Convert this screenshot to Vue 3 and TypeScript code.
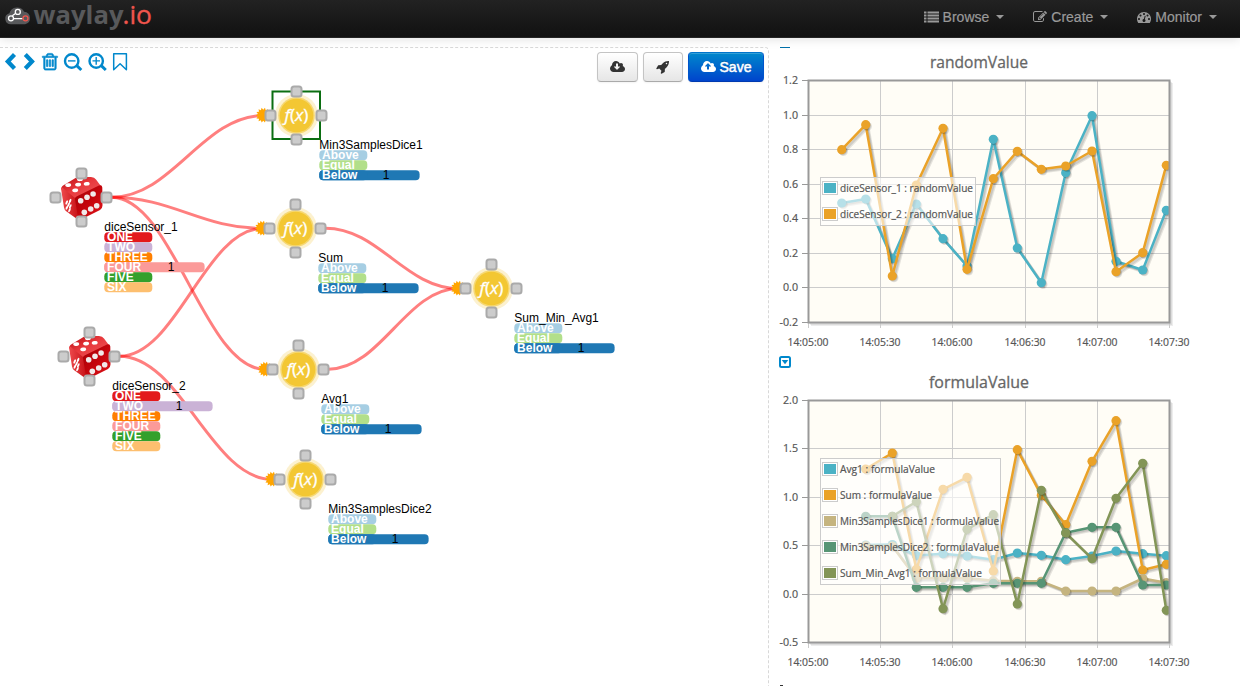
<script setup lang="ts">
type Pt = [number, number]

interface StateRow { name: string; color: string }
interface GraphNode {
  id: string
  kind: 'dice' | 'formula'
  x: number
  y: number
  active: number
  selected?: boolean
}
interface Series { label: string; color: string; start: number; ys: number[] }
interface Chart {
  title: string
  yLabels: string[]
  series: Series[]
  legend: { x: number; y: number; w: number; h: number }
  labelWidths: number[]
  titleWidth: number
}

const diceStates: StateRow[] = [
  { name: 'ONE', color: '#e31a1c' },
  { name: 'TWO', color: '#cab2d6' },
  { name: 'THREE', color: '#ff7f00' },
  { name: 'FOUR', color: '#fb9a99' },
  { name: 'FIVE', color: '#33a02c' },
  { name: 'SIX', color: '#fdbf6f' },
]
const formulaStates: StateRow[] = [
  { name: 'Above', color: '#a6cee3' },
  { name: 'Equal', color: '#b2df8a' },
  { name: 'Below', color: '#1f78b4' },
]

const nodes: GraphNode[] = [
  { id: 'diceSensor_1', kind: 'dice', x: 81.5, y: 197.5, active: 3 },
  { id: 'diceSensor_2', kind: 'dice', x: 89.5, y: 356.5, active: 1 },
  { id: 'Min3SamplesDice1', kind: 'formula', x: 296.5, y: 115.5, active: 2, selected: true },
  { id: 'Sum', kind: 'formula', x: 295.5, y: 228.5, active: 2 },
  { id: 'Avg1', kind: 'formula', x: 298.5, y: 369.5, active: 2 },
  { id: 'Min3SamplesDice2', kind: 'formula', x: 305.5, y: 479.5, active: 2 },
  { id: 'Sum_Min_Avg1', kind: 'formula', x: 491.5, y: 288.5, active: 2 },
]
const links: [number, number][] = [[0, 2], [0, 3], [0, 4], [1, 3], [1, 5], [3, 6], [4, 6]]
const ports: Pt[] = [[0, -24], [25, 0], [0, 24], [-26, 0]]

const statesOf = (n: GraphNode) => (n.kind === 'dice' ? diceStates : formulaStates)

function linkPath([a, b]: [number, number]): string {
  const x1 = nodes[a].x + 30
  const y1 = nodes[a].y - 0.3
  const x2 = nodes[b].x - 33
  const y2 = nodes[b].y
  const reach = (x2 - x1) * 0.4
  return `M${x1} ${y1}C${x1 + reach} ${y1} ${x2 - reach} ${y2} ${x2} ${y2}`
}

const gear = Array.from({ length: 28 }, (_, i) => {
  const r = i % 2 ? 5.5 : 7.6
  const a = (i * Math.PI) / 14
  return `${(Math.cos(a) * r).toFixed(2)},${(Math.sin(a) * r).toFixed(2)}`
}).join(' ')

const rightPips: Pt[] = [[-0.8, 3.2], [5.5, -0.2], [11.6, -3.5], [2.8, 14.8], [9.2, 11.5], [15.2, 8.2]]
const topPips: Pt[] = [[-13.3, -12.4], [-1.5, -18.2], [-3.4, -12.9], [5.2, -13.7], [-6.3, -7.1]]
const leftPips: Pt[] = [[-11.4, 3.5], [-12.9, 7.2], [-14.6, 10.2], [-14.8, 5], [-11.2, 8.8], [-12, 12.6]]

const xs = [33.7, 57.7, 84.3, 108.3, 135, 159, 185.3, 209.3, 233.3, 257.7, 284, 308, 334.7, 358.3]
const xLabels = ['14:05:00', '14:05:30', '14:06:00', '14:06:30', '14:07:00', '14:07:30']

const charts: Chart[] = [
  {
    title: 'randomValue',
    titleWidth: 98,
    yLabels: ['1.2', '1.0', '0.8', '0.6', '0.4', '0.2', '0.0', '-0.2'],
    legend: { x: 12.5, y: 97.5, w: 155, h: 48 },
    labelWidths: [133, 133],
    series: [
      { label: 'diceSensor_1 : randomValue', color: '#4bb2c5', start: 0,
        ys: [123, 119, 178.7, 124, 158.7, 186, 59.3, 168, 202.7, 92.7, 35.7, 181.3, 190, 130.3] },
      { label: 'diceSensor_2 : randomValue', color: '#eaa228', start: 0,
        ys: [69.7, 44.7, 196, 105, 48.3, 189.3, 98.7, 71.3, 89.3, 86, 71, 191.7, 172.7, 85.3] },
    ],
  },
  {
    title: 'formulaValue',
    titleWidth: 100,
    yLabels: ['2.0', '1.5', '1.0', '0.5', '0.0', '-0.5'],
    legend: { x: 12.5, y: 58.5, w: 180, h: 126 },
    labelWidths: [95, 92, 159, 159, 142],
    series: [
      { label: 'Avg1 : formulaValue', color: '#4bb2c5', start: 1,
        ys: [145, 144.5, 155.5, 153.7, 156, 159.7, 153, 155.3, 159.7, 156, 151, 153.7, 155.7] },
      { label: 'Sum : formulaValue', color: '#eaa228', start: 1,
        ys: [69, 53, 169.3, 89.3, 77.3, 171, 49.7, 95.3, 124.7, 61.3, 20.7, 170, 164.3] },
      { label: 'Min3SamplesDice1 : formulaValue', color: '#c5b47f', start: 1,
        ys: [145.7, 146, 178.3, 178, 178, 180.7, 181.3, 181.3, 191, 191, 191, 178.5, 182.7] },
      { label: 'Min3SamplesDice2 : formulaValue', color: '#579575', start: 1,
        ys: [116.3, 116.3, 187.3, 187.3, 187.3, 183.3, 183.3, 183.3, 132.7, 127.3, 127.3, 185, 185] },
      { label: 'Sum_Min_Avg1 : formulaValue', color: '#839557', start: 2,
        ys: [116.3, 101.7, 208.7, 129.3, 114.7, 204, 90.3, 133, 158.7, 98.3, 63.3, 210.3] },
    ],
  },
]

const pointsOf = (s: Series): Pt[] => s.ys.map((y, i) => [xs[i + s.start], y])
const lineOf = (s: Series) => pointsOf(s).map((p) => p.join(',')).join(' ')
const tickY = (i: number, c: Chart) => Math.round((i * 242) / (c.yLabels.length - 1)) + 0.5
const tickX = (i: number) => Math.round(i * 72.2) + 0.5
const shadowSteps = [1, 2, 3]

const cloudPath = 'M1856 1152q0 159-112.5 271.5t-271.5 112.5h-1088q-185 0-316.5-131.5t-131.5-316.5q0-130 70-240t188-165q-2-30-2-43 0-212 150-362t362-150q156 0 285.5 87t188.5 231q71-62 166-62 106 0 181 75t75 181q0 76-41 138 130 31 213.5 135.5t83.5 238.5z'
const downArrow = 'M1216 864q0-14-9-23t-23-9h-224v-352q0-13-9.5-22.5t-22.5-9.5h-192q-13 0-22.5 9.5t-9.5 22.5v352h-224q-13 0-22.5 9.5t-9.5 22.5q0 14 9 23l352 352q9 9 23 9t23-9l351-351q10-12 10-24z'
const upArrow = 'M1216 800q0-14-9-23l-352-352q-9-9-23-9t-23 9l-351 351q-10 12-10 24 0 14 9 23t23 9h224v352q0 13 9.5 22.5t22.5 9.5h192q13 0 22.5-9.5t9.5-22.5v-352h224q13 0 22.5-9.5t9.5-22.5z'
</script>

<template>
  <div class="app">
    <header class="navbar">
      <svg class="logo" width="160" height="37" viewBox="0 0 160 37">
        <path d="M11 24.300a5.600 5.600 0 0 1-1.600-11 8 8 0 0 1 14.700-1.600 6.400 6.400 0 0 1 1 12.600z" fill="#58595b" />
        <g fill="none" stroke="#fff" stroke-width="1.300">
          <path d="M12.300 15.800l3.500-2.600M14 18.600h8.500" />
          <circle cx="11" cy="18.300" r="2.500" />
          <circle cx="17.800" cy="11.900" r="2.500" />
          <circle cx="25.500" cy="18.300" r="2.500" stroke="#f0554d" />
        </g>
        <text class="logo-name" x="33.500" y="23.500" textLength="90" lengthAdjust="spacingAndGlyphs">waylay</text>
        <text class="logo-tld" x="122.500" y="23.500" textLength="29.500" lengthAdjust="spacingAndGlyphs">.io</text>
      </svg>
      <nav class="menu">
        <a class="item browse">
          <svg width="15" height="12" viewBox="0 0 15 12">
            <path d="M0 .5h2.500v2H0zM3.500 .5H15v2H3.500zM0 3.500h2.500v2H0zM3.500 3.500H15v2H3.500zM0 6.500h2.500v2H0zM3.500 6.500H15v2H3.500zM0 9.500h2.500v2H0zM3.500 9.500H15v2H3.500z" fill="currentColor" />
          </svg>
          <span>Browse</span><i class="caret"></i>
        </a>
        <a class="item create">
          <svg width="14" height="14" viewBox="0 0 1792 1792">
            <path fill="currentColor" d="M888 1184l116-116-152-152-116 116v56h96v96h56zm440-720q-16-16-33 1l-350 350q-17 17-1 33t33-1l350-350q17-17 1-33zm80 594v190q0 119-84.500 203.500t-203.500 84.500h-832q-119 0-203.500-84.500t-84.500-203.500v-832q0-119 84.500-203.500t203.500-84.500h832q63 0 117 25 15 7 18 23 3 17-9 29l-49 49q-14 14-32 8-23-6-45-6h-832q-66 0-113 47t-47 113v832q0 66 47 113t113 47h832q66 0 113-47t47-113v-126q0-13 9-22l64-64q15-15 35-7t20 29zm-96-738l288 288-672 672h-288v-288zm444 132l-92 92-288-288 92-92q28-28 68-28t68 28l152 152q28 28 28 68t-28 68z" />
          </svg>
          <span>Create</span><i class="caret"></i>
        </a>
        <a class="item monitor">
          <svg width="14" height="14" viewBox="0 0 1792 1792">
            <path fill="currentColor" d="M384 1152q0-53-37.500-90.500t-90.500-37.500-90.500 37.500-37.500 90.500 37.500 90.500 90.500 37.500 90.500-37.500 37.500-90.500zm192-448q0-53-37.500-90.500t-90.500-37.500-90.500 37.500-37.500 90.500 37.500 90.500 90.500 37.500 90.500-37.500 37.500-90.500zm428 481l101-382q6-26-7.500-48.500t-38.500-29.500-48 6.500-30 39.500l-101 382q-60 5-107 43.500t-63 98.500q-20 77 20 146t117 89 146-20 89-117q16-60-6-117t-72-91zm660-33q0-53-37.500-90.500t-90.500-37.500-90.500 37.500-37.500 90.500 37.500 90.500 90.500 37.500 90.500-37.500 37.500-90.500zm-640-640q0-53-37.500-90.500t-90.500-37.500-90.500 37.500-37.500 90.500 37.500 90.500 90.500 37.500 90.500-37.500 37.500-90.500zm448 192q0-53-37.500-90.500t-90.500-37.500-90.500 37.500-37.500 90.500 37.500 90.500 90.500 37.500 90.500-37.500 37.500-90.500zm320 448q0 261-141 483-19 29-54 29h-1402q-35 0-54-29-141-221-141-483 0-182 71-348t191-286 286-191 348-71 348 71 286 191 191 286 71 348z" />
          </svg>
          <span>Monitor</span><i class="caret"></i>
        </a>
      </nav>
    </header>

    <main class="workspace">
      <section class="editor">
        <svg class="graph" width="768" height="639" viewBox="0 47 768 639">
          <defs>
            <linearGradient id="diceTop" x1="0" y1="0" x2="1" y2="1">
              <stop offset="0" stop-color="#b80a10" />
              <stop offset=".45" stop-color="#e8383c" />
              <stop offset="1" stop-color="#ec5a5c" />
            </linearGradient>
            <linearGradient id="diceLeft" x1="0" y1="0" x2="1" y2="0">
              <stop offset="0" stop-color="#ee4a4d" />
              <stop offset="1" stop-color="#c40d12" />
            </linearGradient>
            <linearGradient id="diceRight" x1="0" y1="0" x2="1" y2="1">
              <stop offset="0" stop-color="#a30006" />
              <stop offset=".5" stop-color="#c4050c" />
              <stop offset="1" stop-color="#e2161c" />
            </linearGradient>
          </defs>

          <g v-for="n in nodes" :key="n.id" :transform="`translate(${n.x} ${n.y})`">
            <g v-if="n.kind === 'dice'">
              <path d="M-14-9L-3-4 17-12 18 8-2 18-16 8z" fill="#c0090f" />
              <path d="M-20-8q-.5-3 2-4.200L-6-19.500q2-1 5-1H9.500q3.500 0 5 2.500l4.500 6q.8 2-1.200 3L-4 0q-2 1-4 .2z" fill="url(#diceTop)" />
              <path d="M-20.500-9q-.2-1.500 1.500-.8L-8-.8q2 1 2.400 3L-2 20q.3 2.800-2.500 1.500l-10.500-7.500q-2-1-2.500-4z" fill="url(#diceLeft)" />
              <path d="M-6.500 1.500q0-2 2-2.800L17.500-12q3-1 3.300 2L21 8q0 3-2.500 4.500L.5 21.500q-3.500 1.500-4-1.500z" fill="url(#diceRight)" />
              <ellipse v-for="(p, i) in topPips" :key="'t' + i" :cx="p[0]" :cy="p[1]" rx="3" ry="1.800" fill="#fff" :transform="`rotate(-8 ${p[0]} ${p[1]})`" />
              <circle v-for="(p, i) in rightPips" :key="'r' + i" :cx="p[0]" :cy="p[1]" r="2.800" fill="#f1eaea" />
              <ellipse v-for="(p, i) in leftPips" :key="'l' + i" :cx="p[0]" :cy="p[1]" rx="1" ry="2.300" fill="#fff" :transform="`rotate(24 ${p[0]} ${p[1]})`" />
            </g>
            <g v-else>
              <rect v-if="n.selected" x="-24" y="-24" width="47.500" height="47.500" fill="none" stroke="#0b6e12" stroke-width="2" />
              <circle r="21.500" fill="#fcf1cf" />
              <circle r="18.300" fill="#f6d873" />
              <circle r="16.800" fill="#f3c733" />
              <text class="fx" x="-12" y="5" textLength="24" lengthAdjust="spacingAndGlyphs"><tspan class="fx-name">f</tspan>(<tspan class="fx-name">x</tspan>)</text>
            </g>
          </g>

          <path v-for="(l, i) in links" :key="i" :d="linkPath(l)" fill="none" stroke="#f00" stroke-opacity=".5" stroke-width="3" />

          <g v-for="n in nodes" :key="n.id + '-info'" :transform="`translate(${n.x} ${n.y})`">
            <polygon v-if="n.kind === 'formula'" :points="gear" transform="translate(-33.200 -.3)" fill="#ffa500" />
            <rect v-for="(p, i) in ports" :key="i" :x="p[0] - 5" :y="p[1] - 5" width="10" height="10" rx="2.500" fill="#ccc" stroke="#aaa" stroke-width="2" />
            <g v-for="(s, i) in statesOf(n)" :key="s.name" :transform="`translate(22.800 ${34.700 + i * 10})`">
              <rect v-if="i === n.active" width="100.300" height="10" rx="4" :fill="s.color" />
              <rect width="48" height="10" rx="4" :fill="s.color" />
              <text class="state" x="2.800" y="8.800">{{ s.name }}</text>
              <text v-if="i === n.active" class="count" x="63.500" y="8.800">1</text>
            </g>
            <text class="node-name" x="22.800" y="33.300">{{ n.id }}</text>
          </g>
        </svg>

        <div class="tools">
          <svg width="126" height="20" viewBox="0 0 126 20" fill="none" stroke="#08c">
            <path d="M10.500 2.500L3.800 9.500l6.700 7M21.300 2.500L28 9.500l-6.700 7" stroke-width="4.200" />
            <svg x="36.200" y="0" width="19.500" height="19.500" viewBox="0 0 1792 1792">
              <path fill="#08c" stroke="#08c" stroke-width="60" d="M704 736v576q0 14-9 23t-23 9h-64q-14 0-23-9t-9-23v-576q0-14 9-23t23-9h64q14 0 23 9t9 23zm256 0v576q0 14-9 23t-23 9h-64q-14 0-23-9t-9-23v-576q0-14 9-23t23-9h64q14 0 23 9t9 23zm256 0v576q0 14-9 23t-23 9h-64q-14 0-23-9t-9-23v-576q0-14 9-23t23-9h64q14 0 23 9t9 23zm128 724v-948h-896v948q0 22 7 40.500t14.500 27 10.500 8.500h832q3 0 10.500-8.500t14.500-27 7-40.500zm-672-1076h448l-48-117q-7-9-17-11h-317q-10 2-17 11zm928 32v64q0 14-9 23t-23 9h-96v948q0 83-47 143.500t-113 60.500h-832q-66 0-113-58.500t-47-141.500v-952h-96q-14 0-23-9t-9-23v-64q0-14 9-23t23-9h309l70-167q15-37 54-63t79-26h320q40 0 79 26t54 63l70 167h309q14 0 23 9t9 23z" />
            </svg>
            <circle cx="67.700" cy="9" r="6.700" stroke-width="2.400" />
            <path d="M72.800 13.700l4.500 4.300" stroke-width="3" />
            <path d="M64 8.900h7.500" stroke-width="1.400" />
            <circle cx="92.200" cy="9" r="6.700" stroke-width="2.400" />
            <path d="M97.300 13.700l4.500 4.300" stroke-width="3" />
            <path d="M88.500 8.900h7.500M92.200 5.100v7.600" stroke-width="1.400" />
            <path d="M109.700 1.700h12.700v16l-6.300-6-6.400 6z" stroke-width="1.500" stroke-linejoin="round" />
          </svg>
        </div>

        <div class="actions">
          <button class="btn download">
            <svg width="15" height="14" viewBox="-64 128 1920 1536"><path fill="currentColor" fill-rule="evenodd" :d="cloudPath + downArrow" /></svg>
          </button>
          <button class="btn deploy">
            <svg width="14" height="14" viewBox="0 0 1792 1792"><path fill="currentColor" d="M1440 448q0-40-28-68t-68-28-68 28-28 68 28 68 68 28 68-28 28-68zm224-288q0 249-75.500 430.500t-253.500 360.500q-81 80-195 176l-20 379q-2 16-16 26l-384 224q-7 4-16 4-12 0-23-9l-64-64q-13-14-8-32l85-276-281-281-276 85q-3 1-9 1-14 0-23-9l-64-64q-17-19-5-39l224-384q10-14 26-16l379-20q96-114 176-195 188-187 358-258t431-71q14 0 24 9.500t10 22.500z" /></svg>
          </button>
          <button class="btn save">
            <svg width="15" height="14" viewBox="-64 128 1920 1536"><path fill="currentColor" fill-rule="evenodd" :d="cloudPath + upArrow" /></svg>
            <span>Save</span>
          </button>
        </div>
      </section>

      <aside class="charts">
        <div class="edge-top"></div>
        <template v-for="(c, ci) in charts" :key="c.title">
          <svg v-if="ci > 0" class="toggle" width="12" height="12" viewBox="0 0 12 12">
            <rect x="1" y="1" width="10" height="10" rx="1.500" fill="none" stroke="#08c" stroke-width="2" />
            <path d="M2.700 4h6.600L6 8.200z" fill="#08c" />
          </svg>
          <svg class="chart" width="471" :height="ci > 0 ? 317 : 308">
            <text class="title" x="210" y="20" text-anchor="middle" :textLength="c.titleWidth" lengthAdjust="spacingAndGlyphs">{{ c.title }}</text>
            <g transform="translate(39 32)">
              <clipPath :id="`plot${ci}`"><rect width="361" height="242" /></clipPath>
              <g fill="none" stroke="#000" stroke-opacity=".07" stroke-width="2">
                <path v-for="k in shadowSteps" :key="k" :d="`M${361 + k} ${k}V${242 + k}H${k}`" />
              </g>
              <rect width="361" height="242" fill="#fffdf6" />
              <g stroke="#ccc">
                <line v-for="(_, i) in xLabels" :key="'x' + i" :x1="tickX(i)" :x2="tickX(i)" y1="0" y2="248" />
                <line v-for="(_, i) in c.yLabels" :key="'y' + i" x1="0" x2="361" :y1="tickY(i, c)" :y2="tickY(i, c)" />
              </g>
              <line v-for="(_, i) in c.yLabels" :key="'m' + i" x1="-6" x2="0" :y1="tickY(i, c)" :y2="tickY(i, c)" stroke="#999" />
              <g :clip-path="`url(#plot${ci})`">
                <g v-for="s in c.series" :key="s.label">
                  <polyline v-for="k in shadowSteps" :key="k" :points="lineOf(s)" fill="none" stroke="#000" stroke-opacity=".1" stroke-width="2.500" :transform="`translate(${k * 0.9} ${k * 0.9})`" />
                  <polyline :points="lineOf(s)" fill="none" :stroke="s.color" stroke-width="2.500" stroke-linejoin="round" />
                  <g v-for="(p, i) in pointsOf(s)" :key="i">
                    <circle v-for="k in shadowSteps" :key="k" :cx="p[0] + k * 0.6" :cy="p[1] + k * 0.6" r="4.500" fill="#000" fill-opacity=".09" />
                    <circle :cx="p[0]" :cy="p[1]" r="4.600" :fill="s.color" />
                  </g>
                </g>
              </g>
              <rect x=".5" y=".5" width="361" height="242" fill="none" stroke="#999" stroke-width="2" />
              <rect :x="c.legend.x" :y="c.legend.y" :width="c.legend.w" :height="c.legend.h" fill="#fff" fill-opacity=".6" stroke="#ccc" />
              <g v-for="(s, i) in c.series" :key="s.label" :transform="`translate(14 ${c.legend.y + 3.500 + i * 26})`">
                <rect x=".5" y=".5" width="15" height="13" fill="#fff" stroke="#ccc" />
                <rect x="2" y="2" width="12" height="10" :fill="s.color" />
                <text class="legend-text" x="18" y="11" :textLength="c.labelWidths[i]" lengthAdjust="spacingAndGlyphs">{{ s.label }}</text>
              </g>
              <text v-for="(t, i) in c.yLabels" :key="'yl' + i" class="tick" x="-10" :y="tickY(i, c) + 3.800" text-anchor="end" :textLength="t.length > 3 ? 18.500 : 15" lengthAdjust="spacingAndGlyphs">{{ t }}</text>
              <text v-for="(t, i) in xLabels" :key="'xl' + i" class="tick" :x="tickX(i) - 0.500" y="266" text-anchor="middle" textLength="41" lengthAdjust="spacingAndGlyphs">{{ t }}</text>
            </g>
          </svg>
        </template>
        <div class="edge-bottom"></div>
      </aside>
    </main>
  </div>
</template>

<style>
html, body { margin: 0; overflow: hidden; background: #fff; }
</style>

<style scoped>
.app { width: 1240px; height: 686px; overflow: hidden; display: flex; flex-direction: column; background: #fff; font: 14px/20px "Liberation Sans", Arial, sans-serif; }
.app svg { display: block; flex: none; }

.navbar { box-sizing: border-box; height: 38px; flex: none; display: flex; justify-content: space-between; background: linear-gradient(#222, #111); border-bottom: 1px solid #252525; box-shadow: 0 1px 10px rgba(0, 0, 0, .13); }
.logo-name { font: 700 25px "Open Sans", sans-serif; fill: #58595b; }
.logo-tld { font: 400 25px "Open Sans", sans-serif; fill: #f0554d; stroke: #f0554d; stroke-width: .3px; }
.menu { display: flex; align-items: flex-start; gap: 29px; padding: 7px 23px 0 0; }
.item { display: flex; align-items: center; color: #999; }
.item span { margin-left: 4px; -webkit-text-stroke: .2px #999; }
.caret { margin-left: 7px; border: 4px solid transparent; border-top-color: #999; border-bottom: 0; }

.workspace { flex: 1; min-height: 0; margin-top: 9px; display: flex; }
.editor { box-sizing: border-box; width: 769px; height: 660px; flex: none; display: grid; grid-template-columns: 1fr auto; align-items: start; border: 1px dashed #d8d8d8; border-left: 0; border-bottom: 0; border-radius: 0 4px 0 0; }
.graph { grid-area: 1 / 1 / 2 / 3; margin-top: -1px; }
.tools { grid-area: 1 / 1; padding: 4px 0 0 4px; }
.actions { grid-area: 1 / 2; display: flex; gap: 5px; padding: 4px 4px 0 0; }

.btn { box-sizing: border-box; height: 30px; display: flex; align-items: center; justify-content: center; padding: 0; color: #333; font: inherit; border: 1px solid #c4c4c4; border-bottom-color: #aaa; border-radius: 4px; background: linear-gradient(#fff, #e6e6e6); box-shadow: inset 0 1px 0 rgba(255, 255, 255, .2), 0 1px 2px rgba(0, 0, 0, .05); }
.download { width: 41px; }
.deploy { width: 40px; }
.save { width: 76px; gap: 4px; color: #fff; border-color: #0074cc #0055cc #003ab0; background: linear-gradient(#08c, #04c); text-shadow: 0 -1px 0 rgba(0, 0, 0, .25); }
.save span { -webkit-text-stroke: .5px #fff; }

.node-name { font: 12px "Liberation Sans", Arial, sans-serif; fill: #000; }
.state { font: 700 12px "Liberation Sans", Arial, sans-serif; fill: #fff; }
.count { font: 12px "Liberation Sans", Arial, sans-serif; fill: #000; }
.fx { font: 500 17px "Open Sans", sans-serif; fill: #fff; stroke: #fff; stroke-width: .3px; }
.fx-name { font-style: italic; }

.charts { width: 471px; flex: none; display: flex; flex-direction: column; }
.edge-top { width: 10px; height: 1px; flex: none; margin-left: 11px; background: #006fa8; }
.edge-bottom { width: 3px; height: 1px; flex: none; margin-left: 11px; background: #333; }
.toggle { margin-left: 10px; }
.title { font: 500 16px "Open Sans", sans-serif; fill: #666; stroke: #666; stroke-width: .3px; }
.tick,
.legend-text { font: 500 10.500px "Open Sans", sans-serif; fill: #555; stroke: #555; stroke-width: .2px; }
</style>
